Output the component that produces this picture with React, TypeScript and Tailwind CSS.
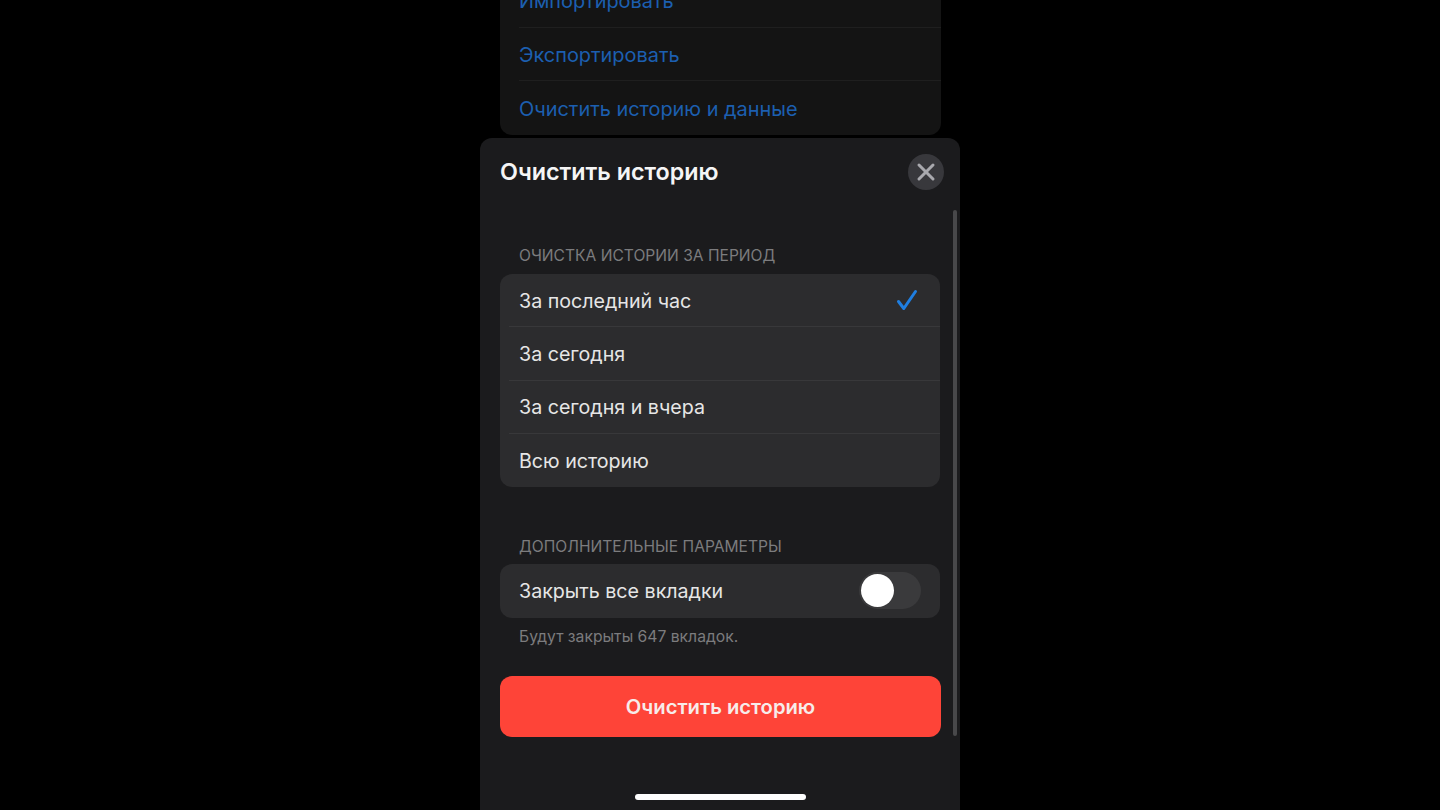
import { X } from 'lucide-react'

const periods = ['За последний час', 'За сегодня', 'За сегодня и вчера', 'Всю историю']
const links = ['Импортировать', 'Экспортировать', 'Очистить историю и данные']

export default function App() {
  return (
    <div className="h-[810px] overflow-hidden bg-black flex flex-col items-center font-['Inter',sans-serif]">
      {/* page behind the sheet */}
      <div className="w-[441px] mt-[-26px] shrink-0 rounded-b-[12px] bg-[#141414] pl-[19.5px]">
        {links.map((link, i) => (
          <div
            key={link}
            className={`h-[53.5px] pt-[4px] flex items-center text-[19.9px] text-[#1c5fb0] ${i < 2 ? 'border-b border-[#1f1f1f]' : ''}`}
          >
            {link}
          </div>
        ))}
      </div>

      {/* sheet */}
      <div className="relative mt-[3.5px] w-[480px] flex-1 rounded-t-[12px] bg-[#1b1b1d] px-[20px]">
        <div className="h-[70px] flex items-center justify-between">
          <h1 className="text-[23.3px] font-semibold text-[#f5f5f5] mb-[1px]">Очистить историю</h1>
          <div className="mr-[-4px] mb-[2px] w-[36px] h-[36px] rounded-full bg-[#38383c] flex items-center justify-center">
            <X className="w-[28px] h-[28px] text-[#a9a9ae]" strokeWidth={2.6} />
          </div>
        </div>

        <div className="pl-[19px] mt-[37px] h-[29px] text-[15.6px] leading-[22px] text-[#7c7c7e]">
          ОЧИСТКА ИСТОРИИ ЗА ПЕРИОД
        </div>
        <div className="rounded-[12px] bg-[#2c2c2e]">
          {periods.map((period, i) => (
            <div key={period} className="pl-[9px]">
              <div
                className={`h-[53.25px] pl-[10px] pr-[22px] pt-[3px] flex items-center justify-between text-[19.65px] text-[#e6e6e6] ${i < 3 ? 'border-b border-[#38383a]' : ''}`}
              >
                {period}
                {i === 0 && (
                  <svg className="mb-[3px] w-[22px] h-[22px] text-[#1f7ee0]" viewBox="0 0 22 22" fill="none" stroke="currentColor" strokeWidth="3" strokeLinecap="round" strokeLinejoin="round">
                    <path d="M2.5 12.5 L7.8 19.5 L19.5 2.5" />
                  </svg>
                )}
              </div>
            </div>
          ))}
        </div>

        <div className="pl-[19px] mt-[49px] h-[28px] text-[15.6px] leading-[22px] text-[#7c7c7e]">
          ДОПОЛНИТЕЛЬНЫЕ ПАРАМЕТРЫ
        </div>
        <div className="h-[53.5px] rounded-[12px] bg-[#2c2c2e] pl-[19px] pr-[19px] flex items-center justify-between text-[19.65px] text-[#e6e6e6]">
          <span className="pt-[2px]">Закрыть все вкладки</span>
          <div className="w-[62px] h-[37px] rounded-full bg-[#3a3a3c] p-[2px]">
            <div className="w-[33px] h-[33px] rounded-full bg-white" />
          </div>
        </div>
        <p className="pl-[19px] mt-[8px] text-[15.7px] leading-[22px] text-[#7c7c7e]">Будут закрыты 647 вкладок.</p>

        <button className="mt-[28.5px] block w-[441px] h-[61px] pt-[1px] rounded-[12px] bg-[#fe4438] text-[20.2px] font-semibold text-[#f7ecea]">
          Очистить историю
        </button>

        {/* scrollbar + home indicator sit over the content */}
        <div className="absolute left-[473px] top-[72px] w-[4px] h-[526px] rounded-full bg-[#48484a]" />
        <div className="absolute left-[155px] top-[656px] w-[171px] h-[6px] rounded-full bg-white" />
      </div>
    </div>
  )
}
